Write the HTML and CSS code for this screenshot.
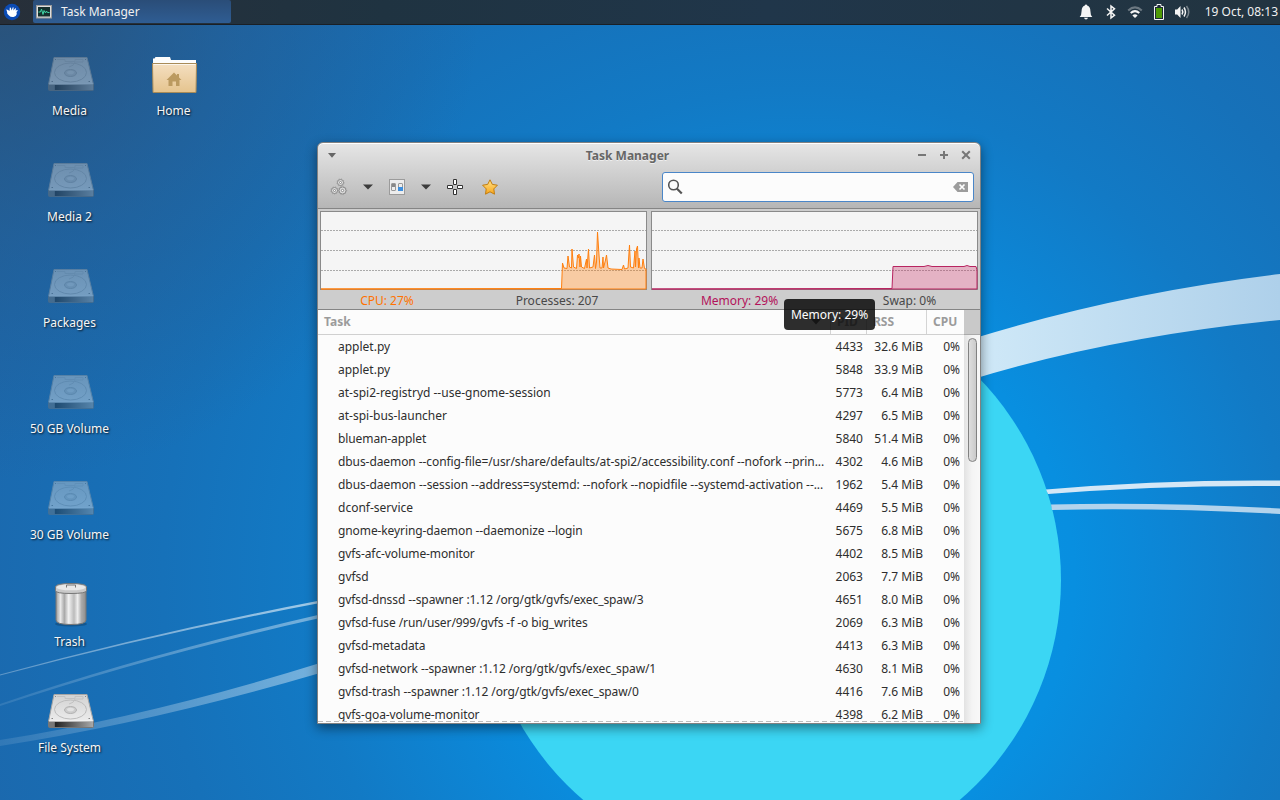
FILE: index.html
```html
<!DOCTYPE html>
<html lang="en">
<head>
<meta charset="utf-8">
<title>Task Manager</title>
<link rel="stylesheet" href="styles.css">
</head>
<body>
<svg class="wallpaper" viewBox="0 0 1280 800" aria-hidden="true">
  <defs>
    <radialGradient id="sky" gradientUnits="userSpaceOnUse" cx="800" cy="580" r="980">
      <stop offset="0" stop-color="#0896ea"/><stop offset=".28" stop-color="#088fe0"/><stop offset=".36" stop-color="#0c87d7"/><stop offset=".5" stop-color="#127ac5"/><stop offset=".65" stop-color="#1671b9"/><stop offset=".85" stop-color="#1b69ae"/><stop offset="1" stop-color="#1f639f"/>
    </radialGradient>
    <radialGradient id="shade" gradientUnits="userSpaceOnUse" cx="0" cy="0" r="480">
      <stop offset="0" stop-color="#2d4d6f" stop-opacity=".8"/><stop offset=".5" stop-color="#2a5480" stop-opacity=".4"/><stop offset="1" stop-color="#2a5480" stop-opacity="0"/>
    </radialGradient>
    <linearGradient id="band" x1="0" x2="1"><stop offset="0" stop-color="#d0e9f8"/><stop offset="1" stop-color="#aed0ea"/></linearGradient>
    <linearGradient id="trail" gradientUnits="userSpaceOnUse" x1="0" y1="0" x2="320" y2="0"><stop offset="0" stop-color="#fff" stop-opacity=".1"/><stop offset="1" stop-color="#fff" stop-opacity=".42"/></linearGradient>
    <linearGradient id="trail2" gradientUnits="userSpaceOnUse" x1="0" y1="0" x2="320" y2="0"><stop offset="0" stop-color="#fff" stop-opacity=".3"/><stop offset="1" stop-color="#fff" stop-opacity=".6"/></linearGradient>
  </defs>
  <rect width="1280" height="800" fill="url(#sky)"/>
  <rect width="1280" height="800" fill="url(#shade)"/>
  <circle cx="771.5" cy="580" r="289.5" fill="#3bd6f4"/>
  <path d="M970 339.500Q1120 293 1280 274V320Q1110 337 970 380Z" fill="url(#band)"/>
  <path d="M1046 489.500Q1160 479.500 1280 480.500V486Q1160 485 1048 494Z" fill="#d4e7f6"/>
  <path d="M1051 504.500Q1160 502 1280 508.500V514Q1160 507.500 1052 510Z" fill="#b3d3ec"/>
  <path d="M0 674.500Q160 631 320 600.500V603Q160 633 0 675.500Z" fill="url(#trail2)"/>
  <path d="M0 704Q140 656 320 614.500V618Q150 656 0 706Z" fill="url(#trail)"/>
  <path d="M0 740Q150 716 320 663V673Q150 723 0 746Z" fill="url(#trail)"/>
</svg>

<svg class="defs" aria-hidden="true">
  <defs>
    <linearGradient id="metal" x1="0" y1="0" x2="0" y2="1"><stop offset="0" stop-color="#d2d2d2"/><stop offset="1" stop-color="#ececec"/></linearGradient>
    <linearGradient id="front" x1="0" x2="1"><stop offset="0" stop-color="#777"/><stop offset=".13" stop-color="#777"/><stop offset=".15" stop-color="#222"/><stop offset="1" stop-color="#aaa"/></linearGradient>
    <linearGradient id="can" x1="0" x2="1"><stop offset="0" stop-color="#999"/><stop offset=".15" stop-color="#e8e8e8"/><stop offset=".28" stop-color="#a9a9a9"/><stop offset=".42" stop-color="#f2f2f2"/><stop offset=".6" stop-color="#bbb"/><stop offset=".72" stop-color="#eee"/><stop offset=".85" stop-color="#aaa"/><stop offset="1" stop-color="#8c8c8c"/></linearGradient>
    <linearGradient id="folder" x1="0" y1="0" x2="0" y2="1"><stop offset="0" stop-color="#f4dfc1"/><stop offset="1" stop-color="#e5c48e"/></linearGradient>
    <linearGradient id="gold" x1="0" y1="0" x2="0" y2="1"><stop offset="0" stop-color="#ffe48a"/><stop offset="1" stop-color="#f9a51a"/></linearGradient>
    <symbol id="disk" viewBox="0 0 48 38">
      <path d="M7 2.500H40L46.500 29.500H1.500Z" fill="url(#metal)" stroke="#a5a5a5"/>
      <path d="M1.500 29.500H46.500V34.500Q46.500 35.500 45.500 35.500H2.500Q1.500 35.500 1.500 34.500Z" fill="url(#front)" stroke="#777"/>
      <path d="M2 29H46" stroke="#f5f5f5"/>
      <ellipse cx="23.500" cy="17.500" rx="16" ry="9.500" fill="none" stroke="#bdbdbd"/>
      <ellipse cx="23.500" cy="18" rx="6" ry="3.500" fill="#ccc" stroke="#b2b2b2"/>
      <ellipse cx="23.500" cy="17.500" rx="3.500" ry="1.800" fill="#e2e2e2"/>
      <path d="M10 4.500H18V6.500H28V4.500H36V7H28Q27 11 22 12" fill="none" stroke="#c2c2c2"/>
      <path d="M8 4.500h1M38 4.500h1M4.500 26.500h1.500M41.500 26.500h1.500" stroke="#888"/>
    </symbol>
  </defs>
</svg>

<header class="panel">
  <svg class="menu-logo" viewBox="0 0 18 18"><circle cx="9" cy="9" r="8.200" fill="#0b4bb4"/><path d="M3.300 6.600Q4 6 5 7L6.500 8 6.800 4.600Q7.700 4 8 5.200L8.600 7.500 9.800 4.200Q10.700 3.900 10.600 5L10.400 7.600 12.300 5.200Q13.300 5 12.900 6.300L12.500 7.600Q14.300 6.500 14.800 7.300Q14.500 8.300 13.500 9L13.800 11Q13.300 13.500 10.500 14Q7.500 14.300 6 12.400L4.300 10.800Q4.100 8.500 3.300 6.600Z" fill="#fff"/></svg>
  <div class="task-button">
    <svg width="16" height="14" viewBox="0 0 16 14"><rect x=".5" y=".5" width="15" height="12.500" fill="#dedede" stroke="#999"/><rect x="2" y="2" width="12" height="9.500" fill="#15302e"/><path d="M2.500 7H4.500L5.500 4 7 9.500 8 5.500 9.500 8 10.500 6 11.500 7.500H13.500" fill="none" stroke="#3fd3a4"/></svg>
    <span>Task Manager</span>
  </div>
  <div class="tray">
    <svg width="14" height="16" viewBox="0 0 14 16"><path d="M7 .5Q8 .5 8.200 1.500Q11.400 2.500 11.400 7Q11.400 11 13.300 13H.7Q2.600 11 2.600 7Q2.600 2.500 5.800 1.500Q6 .5 7 .5ZM5 13.800H9Q8.500 15.600 7 15.600T5 13.800Z" fill="#f5f5f5"/></svg>
    <svg width="10" height="16" viewBox="0 0 10 16"><path d="M1 4.500 8.500 11.200 5 14V2L8.500 4.800 1 11.500" fill="none" stroke="#f5f5f5" stroke-width="1.500"/></svg>
    <svg width="16" height="16" viewBox="0 0 16 16" fill="none" stroke="#f5f5f5" stroke-width="2"><path d="M1.200 6.500Q8 .3 14.800 6.500" opacity=".35"/><path d="M3.700 9Q8 5.200 12.300 9"/><path d="M5.400 11.400Q8 9.300 10.600 11.400L8 14Z" fill="#f5f5f5" stroke="none"/></svg>
    <svg width="10" height="16" viewBox="0 0 10 16"><path d="M.5 2.500H3V.5H7V2.500H9.500V15.500H.5Z" fill="#1d2b36" stroke="#f5f5f5"/><path d="M2 4H8V14H2Z" fill="#4e9a06"/></svg>
    <svg width="17" height="16" viewBox="0 0 17 16" fill="none" stroke="#f5f5f5" stroke-width="1.500"><path d="M1 5.500H3.200L6.500 2V14L3.200 10.500H1Z" fill="#f5f5f5" stroke="none"/><path d="M8 5.500Q9.600 8 8 10.500M10 3.500Q12.900 8 10 12.500"/><path d="M12.500 2Q17 8 12.500 14" opacity=".4"/></svg>
    <time>19 Oct, 08:13</time>
  </div>
</header>

<main class="desktop">
  <div class="icon-column">
    <div class="launcher unmounted"><svg class="pic"><use href="#disk"/></svg><span>Media</span></div>
    <div class="launcher unmounted"><svg class="pic"><use href="#disk"/></svg><span>Media 2</span></div>
    <div class="launcher unmounted"><svg class="pic"><use href="#disk"/></svg><span>Packages</span></div>
    <div class="launcher unmounted"><svg class="pic"><use href="#disk"/></svg><span>50 GB Volume</span></div>
    <div class="launcher unmounted"><svg class="pic"><use href="#disk"/></svg><span>30 GB Volume</span></div>
    <div class="launcher wide-gap"><svg class="pic trash" viewBox="0 0 48 46"><ellipse cx="24" cy="42" rx="16" ry="2.500" fill="#0003"/><path d="M9 9H39V38Q39 42.500 24 42.500T9 38Z" fill="url(#can)" stroke="#777"/><path d="M8.500 5Q8.500 1.500 24 1.500T39.500 5V8.500Q39.500 11.500 24 11.500T8.500 8.500Z" fill="#c9c9c9" stroke="#777"/><ellipse cx="24" cy="5.300" rx="14.500" ry="3" fill="#e8e8e8"/><path d="M19.500 5.500V3H28.500V5.500" fill="none" stroke="#777"/></svg><span>Trash</span></div>
    <div class="launcher"><svg class="pic"><use href="#disk"/></svg><span>File System</span></div>
  </div>
  <div class="icon-column">
    <div class="launcher home"><svg class="pic" viewBox="0 0 48 38"><path d="M3 8V2.500H4.500L5.500 1H20L21 4H46V10H3Z" fill="#fcfcfc"/><path d="M2.500 7.500H46.500L46 36.500H3Z" fill="url(#folder)" stroke="#a88b58"/><path d="M3.500 8.500H45.500" stroke="#fff" opacity=".7"/><path d="M16.500 24 24 16.500 27 19.500V18H29V21.500L31.500 24H29.500V30H26V25.500H22.500V30H18.500V24Z" fill="#bb9a60"/></svg><span>Home</span></div>
  </div>
</main>

<section class="window">
  <div class="titlebar">
    <svg width="10" height="6" viewBox="0 0 10 6"><path d="M1 0H9L5 4.800Z" fill="#666"/></svg>
    <h1>Task Manager</h1>
    <div class="controls">
      <svg width="10" height="10" viewBox="0 0 10 10" stroke="#777" stroke-width="2"><path d="M1 5H9"/></svg>
      <svg width="10" height="10" viewBox="0 0 10 10" stroke="#777" stroke-width="2"><path d="M1 5H9M5 1V9"/></svg>
      <svg width="10" height="10" viewBox="0 0 10 10" stroke="#777" stroke-width="2"><path d="M1.200 1.200 8.800 8.800M8.800 1.200 1.200 8.800"/></svg>
    </div>
  </div>
  <div class="toolbar">
    <svg class="gears" width="18" height="18" viewBox="0 0 18 18" fill="#dcdcdc" stroke="#8a8a8a"><circle cx="10.500" cy="4.500" r="3"/><circle cx="4.500" cy="12.500" r="3"/><circle cx="12.500" cy="12.500" r="3.500"/><g fill="#fff"><circle cx="10.500" cy="4.500" r="1"/><circle cx="4.500" cy="12.500" r="1"/><circle cx="12.500" cy="12.500" r="1.200"/></g><g fill="none" stroke-dasharray="1 1.500" opacity=".6"><circle cx="10.500" cy="4.500" r="3.700"/><circle cx="4.500" cy="12.500" r="3.700"/><circle cx="12.500" cy="12.500" r="4.200"/></g></svg>
    <svg class="arrow" width="10" height="6" viewBox="0 0 10 6"><path d="M0 .5H10L5 5.500Z" fill="#3c3c3c"/></svg>
    <svg class="prefs" width="16" height="16" viewBox="0 0 16 16"><rect x=".5" y=".5" width="15" height="15" fill="#ededed" stroke="#9b9b9b"/><rect x="2.500" y="4.500" width="4" height="7" rx=".5" fill="#eee" stroke="#999"/><path d="M3 5H6V8H3Z" fill="#888"/><rect x="9.500" y="4.500" width="4" height="7" rx=".5" fill="#eee" stroke="#999"/><path d="M9 8H14V12H9Z" fill="#3f8fdd"/></svg>
    <svg class="arrow" width="10" height="6" viewBox="0 0 10 6"><path d="M0 .5H10L5 5.500Z" fill="#3c3c3c"/></svg>
    <svg class="cross" width="16" height="16" viewBox="0 0 16 16" fill="#fff" stroke="#333"><path d="M6.500 .5H9.500V5.500H6.500ZM6.500 10.500H9.500V15.500H6.500ZM.5 6.500H5.500V9.500H.5ZM10.500 6.500H15.500V9.500H10.500Z"/></svg>
    <svg class="star" width="16" height="16" viewBox="0 0 16 16"><path d="M8 .8 10.300 5.400 15.400 6.200 11.800 9.900 12.500 15.200 8 12.800 3.500 15.200 4.200 9.900 .6 6.200 5.700 5.400Z" fill="url(#gold)" stroke="#c17d11" stroke-linejoin="round"/></svg>
    <div class="search">
      <svg width="16" height="16" viewBox="0 0 16 16" fill="none" stroke="#555"><circle cx="6.500" cy="6" r="4.800" stroke-width="1.600"/><path d="M9.800 9.500 14.800 14.500" stroke-width="2.200"/></svg>
      <svg width="15" height="10" viewBox="0 0 15 10"><path d="M0 5 4.500 0H15V10H4.500Z" fill="#9c9c9c"/><path d="M6.500 2.500 11.500 7.500M11.500 2.500 6.500 7.500" stroke="#fff" stroke-width="1.700"/></svg>
    </div>
  </div>
  <div class="monitors">
    <div>
      <svg class="chart" viewBox="0 0 327 79"><rect x=".5" y=".5" width="326" height="78" fill="#f5f5f5" stroke="#8a8a8a"/><path d="M1 19.500H326M1 39.500H326M1 59.500H326" stroke="#aaa" stroke-dasharray="2 1"/><path transform="translate(0 -1)" d="M1 79L241.500 78.500 242.500 53 244 58 247 58.500 248 46 249.500 57 251.500 58 252 39 253.500 57 256.500 58.500 257.500 45 258.500 48 259 44 260 57 260.500 46 261.500 57 264.500 58.500 266.500 49 267 58 268.500 39 269.500 58 273 57 274.500 45 275.500 58.500 276.500 52 277.500 22 279 45 280 58 282 58 283 47 283.500 58 285.500 50 286.500 45 288 58 291 59 302 59.500 303.500 55 304.500 59 308 58 309.500 35 310.500 57 313.500 58 315 41 315.500 57 316.500 39 317.500 36 318.500 58 319 48 320 58 322 58 323 49 324.500 58.500 326 59V79Z" fill="#ff780055" stroke="#ff7f0e"/></svg>
      <div class="stats cpu"><span class="orange">CPU: 27%</span><span>Processes: 207</span></div>
    </div>
    <div>
      <svg class="chart" viewBox="0 0 327 79"><rect x=".5" y=".5" width="326" height="78" fill="#f5f5f5" stroke="#8a8a8a"/><path d="M1 19.500H326M1 39.500H326M1 59.500H326" stroke="#aaa" stroke-dasharray="2 1"/><path transform="translate(0 -1)" d="M1 79L241 78.500 242 56.500H273L277 55.500 281 56.500H313L316 55.500 319 56.500H325L326 60V79Z" fill="#c22d6455" stroke="#b82561"/></svg>
      <div class="stats mem"><span class="pink">Memory: 29%</span><span>Swap: 0%</span></div>
    </div>
  </div>
  <div class="list">
    <div class="row head"><b>Task<svg width="10" height="6" viewBox="0 0 10 6"><path d="M0 0H10L5 5.500Z" fill="#555"/></svg></b><b>PID</b><b>RSS</b><b>CPU</b></div>
    <div class="corner"></div>
    <div class="rows">
      <div class="row"><span>applet.py</span><span>4433</span><span>32.6 MiB</span><span>0%</span></div>
      <div class="row"><span>applet.py</span><span>5848</span><span>33.9 MiB</span><span>0%</span></div>
      <div class="row"><span>at-spi2-registryd --use-gnome-session</span><span>5773</span><span>6.4 MiB</span><span>0%</span></div>
      <div class="row"><span>at-spi-bus-launcher</span><span>4297</span><span>6.5 MiB</span><span>0%</span></div>
      <div class="row"><span class="snug">blueman-applet</span><span>5840</span><span>51.4 MiB</span><span>0%</span></div>
      <div class="row"><span class="snug long">dbus-daemon --config-file=/usr/share/defaults/at-spi2/accessibility.conf --nofork --prin...</span><span>4302</span><span>4.6 MiB</span><span>0%</span></div>
      <div class="row"><span class="snug longer">dbus-daemon --session --address=systemd: --nofork --nopidfile --systemd-activation --...</span><span>1962</span><span>5.4 MiB</span><span>0%</span></div>
      <div class="row"><span>dconf-service</span><span>4469</span><span>5.5 MiB</span><span>0%</span></div>
      <div class="row"><span class="snug">gnome-keyring-daemon --daemonize --login</span><span>5675</span><span>6.8 MiB</span><span>0%</span></div>
      <div class="row"><span class="snug">gvfs-afc-volume-monitor</span><span>4402</span><span>8.5 MiB</span><span>0%</span></div>
      <div class="row"><span>gvfsd</span><span>2063</span><span>7.7 MiB</span><span>0%</span></div>
      <div class="row"><span class="snug">gvfsd-dnssd --spawner :1.12 /org/gtk/gvfs/exec_spaw/3</span><span>4651</span><span>8.0 MiB</span><span>0%</span></div>
      <div class="row"><span class="snug">gvfsd-fuse /run/user/999/gvfs -f -o big_writes</span><span>2069</span><span>6.3 MiB</span><span>0%</span></div>
      <div class="row"><span class="snug">gvfsd-metadata</span><span>4413</span><span>6.3 MiB</span><span>0%</span></div>
      <div class="row"><span class="snug">gvfsd-network --spawner :1.12 /org/gtk/gvfs/exec_spaw/1</span><span>4630</span><span>8.1 MiB</span><span>0%</span></div>
      <div class="row"><span class="snug">gvfsd-trash --spawner :1.12 /org/gtk/gvfs/exec_spaw/0</span><span>4416</span><span>7.6 MiB</span><span>0%</span></div>
      <div class="row"><span class="snug">gvfs-goa-volume-monitor</span><span>4398</span><span>6.2 MiB</span><span>0%</span></div>
    </div>
    <div class="scrollbar"><div class="thumb"></div></div>
  </div>
</section>
<div class="tooltip">Memory: 29%</div>
</body>
</html>
```
FILE: styles.css
```css
* { box-sizing: border-box; }
body {
  margin: 0;
  width: 1280px;
  height: 800px;
  overflow: hidden;
  position: relative;
  font: 12px/17px "Noto Sans", "Open Sans", sans-serif;
  color: #2e2e2e;
}
svg { display: block; flex: none; }
.wallpaper { position: absolute; inset: 0; width: 1280px; height: 800px; z-index: -1; }
.defs { position: absolute; width: 0; height: 0; }

.panel {
  display: flex;
  height: 25px;
  align-items: flex-start;
  color: #f0f0f0;
  background: linear-gradient(90deg, #272f39, #1f3341 30%, #20364a 60%, #223440);
  border-bottom: 1px solid #1a1f25;
}
.menu-logo { width: 18px; height: 18px; margin: 3px 12px 0 3px; }
.task-button {
  display: flex;
  align-items: center;
  gap: 9px;
  width: 198px;
  height: 23px;
  padding-left: 3px;
  border-radius: 2px;
  background: linear-gradient(#2a4d78, #2f5d93);
}
.tray { display: flex; align-items: center; height: 24px; margin-left: auto; padding-right: 2px; }
.tray svg:nth-of-type(1) { margin-right: 13px; }
.tray svg:nth-of-type(2) { margin-right: 11px; }
.tray svg:nth-of-type(3) { margin-right: 11px; }
.tray svg:nth-of-type(4) { margin-right: 10px; }
.tray svg:nth-of-type(5) { margin-right: 14px; }
.tray time { padding-bottom: 2px; }

.desktop { display: flex; padding: 28px 0 0 17px; }
.icon-column { display: flex; flex-direction: column; width: 104px; }
.launcher {
  display: flex;
  flex-direction: column;
  align-items: center;
  width: 105px;
  height: 106px;
  color: #f6f6f6;
  text-shadow: 1px 1px 2px #000c;
}
.launcher span { margin-top: 9px; }
.launcher.wide-gap { margin-top: 1px; }
.pic { width: 48px; height: 38px; margin: 2px 0 0 3px; }
.home .pic { margin: 3px 0 0 1px; }
.home span { margin-top: 8px; }
.pic.trash { height: 46px; margin-top: -2px; }
.pic.trash + span { margin-top: 5px; }
.unmounted .pic { opacity: .42; }

.window {
  position: absolute;
  left: 317px;
  top: 142px;
  width: 664px;
  height: 582px;
  display: flex;
  flex-direction: column;
  overflow: hidden;
  border: 1px solid #818181;
  border-radius: 6px 6px 0 0;
  background: linear-gradient(#e6e6e6, #b5b5b5 66px, #cdcdcd 66px);
  box-shadow: 0 4px 12px #0007, inset 0 1px #fff;
}
.titlebar { display: flex; align-items: center; height: 25px; padding: 0 9px; }
.titlebar h1 {
  flex: 1;
  margin: 0;
  padding-left: 1px;
  font-size: 12px;
  line-height: 17px;
  text-align: center;
  color: #666;
  text-shadow: 0 1px #eee;
}
.controls { display: flex; gap: 12px; margin-top: -1px; }
.toolbar { display: flex; align-items: center; height: 41px; padding: 0 6px 2px 12px; border-bottom: 1px solid #858585; }
.gears { margin-right: 15px; }
.arrow { margin-right: 16px; }
.prefs { margin-right: 16px; }
.cross { margin-right: 19px; }
.search {
  display: flex;
  align-items: center;
  justify-content: space-between;
  width: 312px;
  height: 30px;
  margin-left: auto;
  padding: 0 5px 0 4px;
  border: 1px solid #4a86c8;
  border-radius: 3px;
  background: #fcfcfc;
}
.monitors { display: flex; gap: 4px; height: 101px; padding: 2px 2px 0; border-bottom: 1px solid #858585; }
.chart { width: 327px; height: 79px; }
.stats { display: grid; height: 21px; align-items: center; text-align: center; color: #484848; }
.cpu { grid-template-columns: 134px 193px; }
.mem { grid-template-columns: 177px 150px; }
.stats span:last-child { padding-left: 13px; }
.orange { color: #ff7300; }
.pink { color: #b3125a; }

.list {
  flex: 1;
  min-height: 0;
  display: grid;
  grid-template: 25px 1fr / 646px 16px;
  background: #fcfcfc;
}
.row { display: grid; grid-template-columns: 513px 36px 60px 37px; height: 23px; align-items: center; white-space: nowrap; }
.row > :not(:first-child) { text-align: right; padding-right: 4px; }
.rows .row > :first-child { padding-left: 20px; }
.snug { letter-spacing: -.1px; }
.snug.long { letter-spacing: -.08px; }
.snug.longer { letter-spacing: -.055px; }
.rows {
  position: relative;
  overflow: hidden;
}
.rows::after {
  content: "";
  position: absolute;
  inset: auto 0 1px;
  height: 1px;
  background: repeating-linear-gradient(90deg, #bdbdbd 0 5px, #fcfcfc 5px 8px);
}
.head { height: 25px; align-items: stretch; color: #9b9b9b; line-height: 24px; border-bottom: 1px solid #d0d0d0; }
.head b { padding-left: 6px; border-right: 1px solid #d4d4d4; }
.head b:first-child { display: flex; align-items: center; justify-content: space-between; padding-right: 9px; }
.head.row b:not(:first-child) { text-align: left; padding-right: 0; }
.head b:last-child { border: 0; }
.corner { background: #c9c9c9; border-bottom: 1px solid #aaa; }
.scrollbar { padding: 3px 3px 0 4px; background: linear-gradient(90deg, #e2e2e2, #f4f4f4 50%, #f8f8f8); }
.thumb { width: 9px; height: 124px; border: 1px solid #818181; border-radius: 5px; background: linear-gradient(90deg, #dedede, #cacaca); }
.tooltip {
  position: absolute;
  left: 784px;
  top: 299px;
  width: 91px;
  height: 31px;
  border-radius: 4px;
  background: rgba(10, 10, 10, .86);
  color: #fff;
  line-height: 31px;
  text-align: center;
}
```
